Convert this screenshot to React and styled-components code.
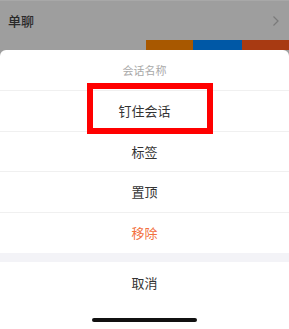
import React from 'react'
import styled, { createGlobalStyle } from 'styled-components'

const GlobalStyle = createGlobalStyle`
  html, body {
    margin: 0;
    padding: 0;
    background: #9e9e9e;
    font-family: "Noto Sans CJK SC", "Noto Sans", sans-serif;
  }
`

const Screen = styled.div`
  width: 289px;
  height: 329px;
  overflow: hidden;
  display: flex;
  flex-direction: column;
  background: #9e9e9e;
`

const ChatRow = styled.div`
  height: 40px;
  display: flex;
  align-items: center;
  justify-content: space-between;
  padding: 0 9px 0 8px;
  border-top: 1px solid #a8a8a8;
  box-sizing: border-box;
  font-size: 13px;
  font-weight: 500;
  color: #2a2a2a;
`

const Strip = styled.div`
  height: 10px;
  display: flex;
  justify-content: flex-end;
`

const Tile = styled.div`
  width: ${p => p.$w}px;
  background: ${p => p.$color};
`

const Sheet = styled.div`
  position: relative;
  flex: 1;
  background: #fff;
  border-radius: 6px 6px 0 0;
  display: flex;
  flex-direction: column;
`

const Title = styled.div`
  height: 41px;
  display: flex;
  align-items: center;
  justify-content: center;
  font-size: 11px;
  color: #a9a9a9;
  border-bottom: 1px solid #f0f0f0;
  box-sizing: border-box;
`

const Item = styled.div`
  height: 40.5px;
  display: flex;
  align-items: center;
  justify-content: center;
  font-size: 13px;
  color: ${p => (p.$danger ? '#f2703e' : '#333')};
  border-bottom: ${p => (p.$last ? 'none' : '1px solid #f0f0f0')};
  box-sizing: border-box;
`

const Gap = styled.div`
  height: 9px;
  background: #f3f3f7;
`

const Cancel = styled(Item)`
  height: 40px;
  border-bottom: none;
`

const HomeBar = styled.div`
  width: 105px;
  height: 4px;
  border-radius: 2px;
  background: #111;
  margin: 16px auto 0;
`

const Highlight = styled.div`
  position: absolute;
  left: 87px;
  top: 33px;
  width: 126px;
  height: 51px;
  border: 6px solid #ff0000;
  box-sizing: border-box;
  pointer-events: none;
`

const Chevron = () => (
  <svg width="8" height="12" viewBox="0 0 8 12">
    <path d="M1.5 1.5 L6 6 L1.5 10.5" fill="none" stroke="#7a7a7a" strokeWidth="1.2" />
  </svg>
)

export default function App() {
  return (
    <>
      <GlobalStyle />
      <Screen>
        <ChatRow>
          单聊
          <Chevron />
        </ChatRow>
        <Strip>
          <Tile $w={47} $color="#a85800" />
          <Tile $w={49} $color="#0058a6" />
          <Tile $w={47} $color="#a83a12" />
        </Strip>
        <Sheet>
          <Title>会话名称</Title>
          <Item>钉住会话</Item>
          <Item>标签</Item>
          <Item>置顶</Item>
          <Item $danger $last>移除</Item>
          <Gap />
          <Cancel>取消</Cancel>
          <HomeBar />
          <Highlight />
        </Sheet>
      </Screen>
    </>
  )
}
